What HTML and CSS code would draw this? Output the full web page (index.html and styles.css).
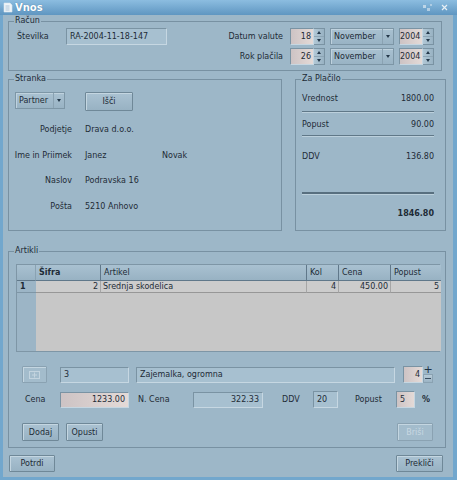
FILE: index.html
```html
<!DOCTYPE html>
<html>
<head>
<meta charset="utf-8">
<link rel="stylesheet" href="styles.css">
</head>
<body>
<div class="window">
  <div class="titlebar">
    <svg class="ticon" width="10" height="11" viewBox="0 0 10 11"><path d="M1 1h6l2 2v7H1z" fill="#eef4f8" stroke="#d8e6ef" stroke-width="0.6"/><path d="M2.5 4h4M2.5 6h4M2.5 8h4" stroke="#9cbad0" stroke-width="0.8"/></svg>
    <span class="title">Vnos</span>
    <svg class="tbtns" width="30" height="10" viewBox="0 0 30 10"><rect x="2" y="2" width="3" height="3" fill="#cfe0ec" opacity="0.8"/><rect x="6" y="5" width="3" height="3" fill="#cfe0ec" opacity="0.7"/><rect x="9" y="1" width="2" height="2" fill="#cfe0ec" opacity="0.6"/><path d="M21 2l5 5M26 2l-5 5" stroke="#e6eff5" stroke-width="1.2"/></svg>
  </div>
  <div class="frame">
    <fieldset class="grp racun">
      <legend>Račun</legend>
      <div class="racun-in">
        <div class="racun-left">
          <span class="lbl-stev">Številka</span>
          <div class="field w-stev">RA-2004-11-18-147</div>
        </div>
        <div class="dates">
          <span class="rlabel">Datum valute</span>
          <div class="spin"><div class="spin-field pink">18</div><div class="spin-btns"><span class="sb"><i class="up"></i></span><span class="sb"><i class="dn"></i></span></div></div>
          <div class="combo"><span class="combo-text">November</span><span class="combo-btn"><i class="dn"></i></span></div>
          <div class="spin"><div class="spin-field pink">2004</div><div class="spin-btns"><span class="sb"><i class="up"></i></span><span class="sb"><i class="dn"></i></span></div></div>
          <span class="rlabel">Rok plačila</span>
          <div class="spin"><div class="spin-field pink">26</div><div class="spin-btns"><span class="sb"><i class="up"></i></span><span class="sb"><i class="dn"></i></span></div></div>
          <div class="combo"><span class="combo-text">November</span><span class="combo-btn"><i class="dn"></i></span></div>
          <div class="spin"><div class="spin-field pink">2004</div><div class="spin-btns"><span class="sb"><i class="up"></i></span><span class="sb"><i class="dn"></i></span></div></div>
        </div>
      </div>
    </fieldset>

    <div class="mid">
      <fieldset class="grp stranka">
        <legend>Stranka</legend>
        <div class="stranka-in">
          <div class="partner-row">
            <div class="combo w-partner"><span class="combo-text">Partner</span><span class="combo-btn"><i class="dn"></i></span></div>
            <div class="btn w-isci">Išči</div>
          </div>
          <div class="info">
            <span class="ilabel">Podjetje</span><span class="ival">Drava d.o.o.</span><span></span>
            <span class="ilabel">Ime in Priimek</span><span class="ival">Janez</span><span>Novak</span>
            <span class="ilabel">Naslov</span><span class="ival">Podravska 16</span><span></span>
            <span class="ilabel">Pošta</span><span class="ival">5210 Anhovo</span><span></span>
          </div>
        </div>
      </fieldset>
      <fieldset class="grp placilo">
        <legend>Za Plačilo</legend>
        <div class="placilo-in">
          <div class="prow r1"><span>Vrednost</span><span>1800.00</span></div>
          <div class="sep s1"></div>
          <div class="prow r2"><span>Popust</span><span>90.00</span></div>
          <div class="sep s2"></div>
          <div class="prow r3"><span>DDV</span><span>136.80</span></div>
          <div class="sep thick"></div>
          <div class="prow total"><span></span><span>1846.80</span></div>
        </div>
      </fieldset>
    </div>

    <fieldset class="grp artikli">
      <legend>Artikli</legend>
      <div class="artikli-in">
        <div class="table">
          <div class="th corner"></div>
          <div class="th bold">Šifra</div>
          <div class="th">Artikel</div>
          <div class="th">Kol</div>
          <div class="th">Cena</div>
          <div class="th last">Popust</div>
          <div class="rh">1</div>
          <div class="td num">2</div>
          <div class="td">Srednja skodelica</div>
          <div class="td num">4</div>
          <div class="td num">450.00</div>
          <div class="td num last">5</div>
          <div class="rh-rest"></div>
          <div class="body-rest"></div>
        </div>

        <div class="arow a1">
          <div class="btn disabled w-icon"><svg width="11" height="8" viewBox="0 0 11 8"><rect x="0.5" y="0.5" width="10" height="7" fill="none" stroke="#c3d4df"/><path d="M3 4h5M5.5 1.5v5" stroke="#c3d4df"/></svg></div>
          <div class="field w-sifra">3</div>
          <div class="field w-naziv">Zajemalka, ogromna</div>
          <div class="spin2"><div class="spin-field pink num">4</div><div class="pm"><span class="plus">+</span><span class="minus"></span></div></div>
        </div>
        <div class="arow a2">
          <span class="alabel l-cena">Cena</span>
          <div class="field pink num w-cena">1233.00</div>
          <span class="alabel l-ncena">N. Cena</span>
          <div class="field num w-ncena">322.33</div>
          <span class="alabel l-ddv">DDV</span>
          <div class="field w-ddv">20</div>
          <span class="alabel l-popust">Popust</span>
          <div class="field pink w-pop">5</div>
          <span class="pct">%</span>
        </div>
        <div class="arow a3">
          <div class="btn w-dodaj">Dodaj</div>
          <div class="btn w-opusti">Opusti</div>
          <div class="btn disabled w-brisi">Briši</div>
        </div>
      </div>
    </fieldset>

    <div class="footer">
      <div class="btn w-potrdi">Potrdi</div>
      <div class="btn w-preklici">Prekliči</div>
    </div>
  </div>
</div>
</body>
</html>
```

FILE: styles.css
```css
* { box-sizing: border-box; }
body {
  margin: 0;
  font-family: "DejaVu Sans", sans-serif;
  font-size: 8px;
  color: #1d2b36;
}
.window {
  width: 457px;
  height: 480px;
  display: flex;
  flex-direction: column;
  background: #72a7cd;
  overflow: hidden;
}
.titlebar {
  height: 15px;
  flex: none;
  display: flex;
  align-items: center;
  background: linear-gradient(#8cbde0, #5f96c1);
  color: #fff;
  padding-left: 3px;
}
.ticon { flex: none; }
.title {
  font-weight: bold;
  font-size: 10px;
  margin-left: 2px;
  text-shadow: 0 0 1px #3a6f98;
}
.tbtns { margin-left: auto; margin-right: 6px; }
.frame {
  flex: 1;
  margin: 0 4px 3px 3px;
  background: #9db7c8;
  display: flex;
  flex-direction: column;
}

/* group boxes */
.grp {
  margin: 0;
  padding: 0;
  border: 1px solid #7891a2;
  min-width: 0;
}
legend {
  font-size: 8px;
  line-height: 10px;
  padding: 0 1px;
  margin-left: 5px;
}

/* generic widgets */
.field {
  height: 17px;
  background: #a7c0d0;
  border: 1px solid;
  border-color: #7a93a3 #c6d7e2 #c6d7e2 #7a93a3;
  padding: 0 3px;
  display: flex;
  align-items: center;
  white-space: nowrap;
}
.pink { background: linear-gradient(90deg, #cdc3c4, #e4dad7); }
.num { justify-content: flex-end; }
.btn {
  background: linear-gradient(#aac2d2, #98b2c3);
  border: 1px solid #6f8898;
  box-shadow: inset 1px 1px 0 #c4d6e1;
  border-radius: 1px;
  display: flex;
  align-items: center;
  justify-content: center;
  white-space: nowrap;
}
.btn.disabled {
  color: #c8d8e2;
  border-color: #8aa2b2;
  background: #a3bccc;
}
.up, .dn {
  display: block;
  width: 0;
  height: 0;
  border-left: 2.5px solid transparent;
  border-right: 2.5px solid transparent;
}
.up { border-bottom: 3px solid #24384a; }
.dn { border-top: 3px solid #24384a; }

.spin {
  height: 17px;
  display: flex;
}
.spin-field {
  flex: 1;
  border: 1px solid;
  border-color: #7a93a3 #c6d7e2 #c6d7e2 #7a93a3;
  display: flex;
  align-items: center;
  justify-content: flex-end;
  padding-right: 2px;
}
.spin-btns {
  width: 11px;
  display: flex;
  flex-direction: column;
  border: 1px solid #7a93a3;
  border-left: none;
  background: linear-gradient(90deg, #b2c8d6, #98b2c3);
}
.sb {
  flex: 1;
  display: flex;
  align-items: center;
  justify-content: center;
}
.sb + .sb { border-top: 1px solid #8ea6b6; }

.combo {
  height: 17px;
  display: flex;
  background: linear-gradient(#a9c1d1, #99b3c4);
  border: 1px solid #7d96a6;
  box-shadow: inset 1px 1px 0 #bfd2de;
}
.combo-text {
  flex: 1;
  display: flex;
  align-items: center;
  padding-left: 3px;
}
.combo-btn {
  width: 11px;
  display: flex;
  align-items: center;
  justify-content: center;
  border-left: 1px solid #8aa2b2;
}

/* Račun */
.racun {
  margin: 1px 0 0 5px;
  width: 434px;
}
.racun-in {
  display: flex;
  padding: 2px 7px 5px 8px;
}
.racun-left {
  display: flex;
  align-items: center;
  height: 17px;
}
.lbl-stev { width: 49px; }
.w-stev { width: 101px; }
.dates {
  margin-left: auto;
  display: grid;
  grid-template-columns: auto 35px 64px 35px;
  grid-auto-rows: 17px;
  column-gap: 5px;
  row-gap: 3px;
  align-items: center;
}
.rlabel { text-align: right; margin-right: 2px; white-space: nowrap; }

/* middle */
.mid {
  display: flex;
  margin: 3px 0 0 5px;
  height: 157px;
}
.stranka { width: 274px; }
.stranka-in { padding: 8px 0 0 5px; }
.partner-row { display: flex; align-items: flex-start; margin-left: 1px; }
.w-partner { width: 50px; }
.w-isci { width: 48px; height: 19px; margin-left: 20px; }
.info {
  margin-top: 6px;
  display: grid;
  grid-template-columns: 58px 90px auto;
  grid-auto-rows: 25.5px;
  align-items: center;
  white-space: nowrap;
}
.ilabel { text-align: right; }
.ival { padding-left: 13px; }

.placilo { width: 151px; margin-left: 13px; }
.placilo-in { padding: 0 11px 0 6px; }
.prow {
  display: flex;
  justify-content: space-between;
  height: 12px;
  align-items: center;
}
.r1 { margin-top: 8px; }
.sep { height: 2px; border-top: 1px solid #607888; border-bottom: 1px solid #bcd0dc; }
.s1 { margin-top: 7px; }
.r2 { margin-top: 5px; }
.s2 { margin-top: 5px; }
.r3 { margin-top: 13px; }
.thick { margin-top: 30px; height: 3px; border-top: 2px solid #586f7f; }
.total { margin-top: 12px; font-weight: bold; }

/* Artikli */
.artikli {
  margin: 15px 0 0 5px;
  width: 438px;
}
.artikli-in { padding: 8px 0 6px 0; }
.table {
  margin-left: 7px;
  width: 424px;
  height: 88px;
  display: grid;
  grid-template-columns: 19px 65px 206px 32px 52px 50px;
  grid-template-rows: 16px 12px 1fr;
  border: 1px solid #7e96a6;
  background: #c7c7c7;
}
.th {
  background: linear-gradient(#a9c1d1, #98b2c3);
  border-right: 1px solid #60788a;
  border-bottom: 1px solid #60788a;
  display: flex;
  align-items: center;
  padding-left: 3px;
}
.th.corner { border-right: 1px solid #8aa2b2; }
.th.bold { font-weight: bold; }
.th.last { border-right: none; }
.rh {
  background: #9cb5c6;
  border-bottom: 1px solid #7e96a6;
  font-weight: bold;
  display: flex;
  align-items: center;
  padding-left: 3px;
}
.td {
  background: #cccccc;
  border-bottom: 1px solid #979797;
  border-right: 1px solid #a6a6a6;
  display: flex;
  align-items: center;
  padding: 0 2px;
  white-space: nowrap;
}
.td.last { border-right: none; }
.rh-rest { background: #9cb5c6; }
.body-rest { grid-column: 2 / 7; background: #c7c7c7; }

.arow { display: flex; align-items: center; padding-left: 13px; }
.a1 { margin-top: 14px; height: 17px; }
.w-icon { width: 25px; height: 17px; }
.w-sifra { width: 69px; height: 16px; margin-left: 13px; }
.w-naziv { width: 259px; height: 16px; margin-left: 7px; }
.spin2 { display: flex; width: 30px; height: 17px; margin-left: 8px; }
.pm {
  width: 10px;
  display: flex;
  flex-direction: column;
}
.plus {
  flex: 1;
  display: flex;
  align-items: center;
  justify-content: center;
  font-size: 11px;
  line-height: 8px;
  color: #1f3345;
}
.minus {
  flex: 1;
  border: 1px solid #8aa2b2;
  background: linear-gradient(#b7cbd8, #9bb4c5);
}
.minus::after {
  content: "";
  display: block;
  margin: 3px 1px 0;
  height: 1px;
  background: #3a4e60;
}
.a2 { margin-top: 8px; height: 17px; }
.alabel { white-space: nowrap; }
.l-cena { width: 38px; padding-left: 3px; }
.w-cena { width: 69px; height: 16px; }
.l-ncena { width: 55px; margin-left: 9px; }
.w-ncena { width: 70px; height: 16px; }
.l-ddv { width: 31px; margin-left: 19px; }
.w-ddv { width: 25px; height: 17px; }
.l-popust { width: 41px; margin-left: 17px; }
.w-pop { width: 19px; height: 17px; }
.pct { margin-left: 7px; font-weight: bold; }
.a3 { margin-top: 15px; height: 18px; padding-right: 12px; }
.w-dodaj { width: 37px; height: 18px; }
.w-opusti { width: 37px; height: 18px; margin-left: 7px; }
.w-brisi { width: 36px; height: 18px; margin-left: auto; }

.footer {
  display: flex;
  margin-top: 7px;
  padding: 0 10px 0 6px;
}
.w-potrdi { width: 46px; height: 17px; }
.w-preklici { width: 47px; height: 17px; margin-left: auto; }
```
